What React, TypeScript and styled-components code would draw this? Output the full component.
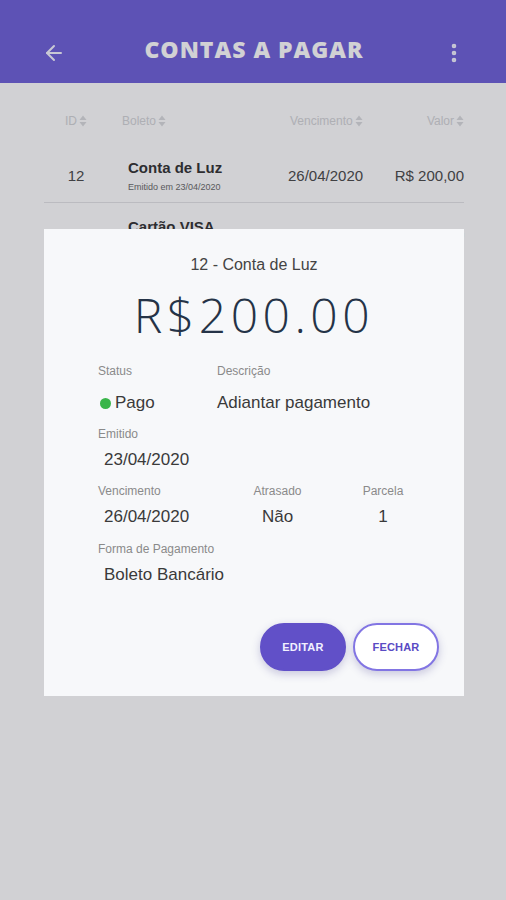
import React from "react";
import styled, { createGlobalStyle } from "styled-components";
import { ArrowLeft, EllipsisVertical } from "lucide-react";

const Global = createGlobalStyle`
  html, body { margin: 0; padding: 0; background: #ffffff; }
  body { font-family: "Liberation Sans", Arial, sans-serif; }
  * { box-sizing: border-box; }
`;

const Page = styled.div`
  position: relative;
  width: 506px;
  height: 900px;
  overflow: hidden;
  background: #ffffff;
`;

const Header = styled.header`
  height: 83px;
  background: #6f61d9;
  display: grid;
  grid-template-columns: 66px 1fr 64px;
  align-items: center;
  padding-top: 22px;
  color: #ffffff;
`;

const IconSlot = styled.div<{ $align: "start" | "end" }>`
  display: flex;
  justify-content: ${(p) => (p.$align === "start" ? "flex-end" : "flex-start")};
  align-items: center;
`;

const Title = styled.h1`
  margin: 0 0 7px;
  text-align: center;
  font-family: "Open Sans", sans-serif;
  font-weight: 800;
  font-size: 23px;
  letter-spacing: 1px;
  color: #ffffff;
`;

const Table = styled.div`
  margin: 0 42px 0 44px;
`;

const Row = styled.div<{ $head?: boolean; $push?: number }>`
  display: grid;
  grid-template-columns: 64px 172px 96px 1fr;
  align-items: center;
  height: ${(p) => (p.$head ? 64 : 56 + (p.$push ?? 0))}px;
  padding-top: ${(p) => (p.$head ? 12 : 2 + (p.$push ?? 0))}px;
  border-bottom: ${(p) => (p.$head ? "none" : "1px solid #e4e4e6")};
`;

const HeadCell = styled.div<{ $pad?: number; $right?: boolean; $center?: boolean }>`
  display: flex;
  align-items: center;
  justify-content: ${(p) => (p.$right ? "flex-end" : p.$center ? "center" : "flex-start")};
  gap: 2px;
  padding-left: ${(p) => p.$pad ?? 0}px;
  font-size: 12px;
  color: #d4d5d8;
`;

const Cell = styled.div<{ $pad?: number; $right?: boolean; $center?: boolean }>`
  padding-left: ${(p) => p.$pad ?? 0}px;
  text-align: ${(p) => (p.$right ? "right" : p.$center ? "center" : "left")};
  font-size: 15px;
  color: #4a4a4a;
`;

const BillName = styled.div`
  font-size: 15px;
  font-weight: 700;
  color: #333333;
`;

const BillSub = styled.div`
  margin-top: 6px;
  font-size: 9px;
  color: #6a6a6a;
`;

const Overlay = styled.div`
  position: absolute;
  inset: 0;
  background: rgba(24, 26, 40, 0.2);
`;

const Modal = styled.div`
  position: absolute;
  left: 44px;
  top: 229px;
  width: 420px;
  height: 467px;
  background: #f7f8fa;
  padding: 26px 25px 25px 54px;
  display: flex;
  flex-direction: column;
`;

const ModalTitle = styled.div`
  margin-left: -29px;
  text-align: center;
  font-size: 16px;
  color: #444444;
  line-height: 20px;
`;

const Price = styled.div`
  margin-left: -29px;
  margin-top: 12px;
  text-align: center;
  font-family: "Open Sans", sans-serif;
  font-weight: 300;
  font-size: 48px;
  line-height: 56px;
  letter-spacing: 4.5px;
  color: #253347;
`;

const FieldRow = styled.div<{ $cols: string; $top: number }>`
  display: grid;
  grid-template-columns: ${(p) => p.$cols};
  margin-top: ${(p) => p.$top}px;
`;

const Field = styled.div<{ $center?: boolean; $col?: number }>`
  display: flex;
  flex-direction: column;
  align-items: ${(p) => (p.$center ? "center" : "flex-start")};
  grid-column: ${(p) => p.$col ?? "auto"};
`;

const Label = styled.div`
  font-size: 12px;
  line-height: 14px;
  color: #8a8a8a;
`;

const Value = styled.div<{ $indent?: number; $gap?: number }>`
  display: flex;
  align-items: center;
  gap: 4px;
  margin-top: ${(p) => p.$gap ?? 9}px;
  padding-left: ${(p) => p.$indent ?? 0}px;
  font-size: 17px;
  line-height: 20px;
  color: #3a3a3a;
`;

const Dot = styled.span`
  width: 11px;
  height: 11px;
  border-radius: 50%;
  background: #39b54a;
  margin-left: 2px;
`;

const Actions = styled.div`
  margin-top: auto;
  display: flex;
  justify-content: flex-end;
  gap: 7px;
`;

const Button = styled.button<{ $filled?: boolean }>`
  width: 86px;
  height: 48px;
  border-radius: 24px;
  font-family: "Liberation Sans", Arial, sans-serif;
  font-weight: 700;
  font-size: 11px;
  letter-spacing: 0.2px;
  cursor: pointer;
  border: 2px solid ${(p) => (p.$filled ? "#6150c8" : "#8275e3")};
  background: ${(p) => (p.$filled ? "#6150c8" : "#ffffff")};
  color: ${(p) => (p.$filled ? "#f2f0ff" : "#5a4bc4")};
  box-shadow: 0 3px 8px rgba(60, 50, 140, 0.25);
`;

const SortIcon = () => (
  <svg width="8" height="12" viewBox="0 0 8 12">
    <path d="M4 0.5 L7.5 5 H0.5 Z" fill="#dadbde" />
    <path d="M4 11.5 L7.5 7 H0.5 Z" fill="#dadbde" />
  </svg>
);

export default function App() {
  return (
    <Page>
      <Global />
      <Header>
        <IconSlot $align="start">
          <ArrowLeft size={24} strokeWidth={2} color="#f4f4ff" />
        </IconSlot>
        <Title>CONTAS A PAGAR</Title>
        <IconSlot $align="end">
          <EllipsisVertical size={24} strokeWidth={2.6} color="#f4f4ff" />
        </IconSlot>
      </Header>
      <Table>
        <Row $head>
          <HeadCell $center>
            ID <SortIcon />
          </HeadCell>
          <HeadCell $pad={14}>
            Boleto <SortIcon />
          </HeadCell>
          <HeadCell $pad={10}>
            Vencimento <SortIcon />
          </HeadCell>
          <HeadCell $right>
            Valor <SortIcon />
          </HeadCell>
        </Row>
        <Row>
          <Cell $center>12</Cell>
          <Cell $pad={20}>
            <BillName>Conta de Luz</BillName>
            <BillSub>Emitido em 23/04/2020</BillSub>
          </Cell>
          <Cell $pad={8}>26/04/2020</Cell>
          <Cell $right>R$ 200,00</Cell>
        </Row>
        <Row $push={3}>
          <Cell $center>13</Cell>
          <Cell $pad={20}>
            <BillName>Cartão VISA</BillName>
            <BillSub>Emitido em 23/04/2020</BillSub>
          </Cell>
          <Cell $pad={8}>30/04/2020</Cell>
          <Cell $right>R$ 450,00</Cell>
        </Row>
      </Table>
      <Overlay />
      <Modal>
        <ModalTitle>12 - Conta de Luz</ModalTitle>
        <Price>R$200.00</Price>
        <FieldRow $cols="119px 1fr" $top={21}>
          <Field>
            <Label>Status</Label>
            <Value $gap={15}>
              <Dot />
              Pago
            </Value>
          </Field>
          <Field>
            <Label>Descrição</Label>
            <Value $gap={15}>Adiantar pagamento</Value>
          </Field>
        </FieldRow>
        <FieldRow $cols="1fr" $top={14}>
          <Field>
            <Label>Emitido</Label>
            <Value $indent={6}>23/04/2020</Value>
          </Field>
        </FieldRow>
        <FieldRow $cols="155px 49px 60px 42px" $top={14}>
          <Field>
            <Label>Vencimento</Label>
            <Value $indent={6}>26/04/2020</Value>
          </Field>
          <Field $center>
            <Label>Atrasado</Label>
            <Value>Não</Value>
          </Field>
          <Field $center $col={4}>
            <Label>Parcela</Label>
            <Value>1</Value>
          </Field>
        </FieldRow>
        <FieldRow $cols="1fr" $top={15}>
          <Field>
            <Label>Forma de Pagamento</Label>
            <Value $indent={6}>Boleto Bancário</Value>
          </Field>
        </FieldRow>
        <Actions>
          <Button $filled>EDITAR</Button>
          <Button>FECHAR</Button>
        </Actions>
      </Modal>
    </Page>
  );
}
